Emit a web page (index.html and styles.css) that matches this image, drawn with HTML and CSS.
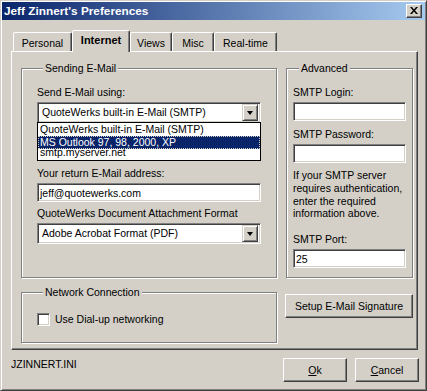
FILE: index.html
```html
<!DOCTYPE html>
<html>
<head>
<meta charset="utf-8">
<link rel="stylesheet" href="styles.css">
</head>
<body>
<div class="window">
  <div class="titlebar">
    <span class="title">Jeff Zinnert's Preferences</span>
    <span class="close"><svg width="8" height="7" viewBox="0 0 8 7"><path d="M0 0h2l2 2.5 2-2.5h2l-3 3.5 3 3.5h-2l-2-2.5-2 2.5h-2l3-3.5z" fill="#000"/></svg></span>
  </div>
  <div class="content">
    <div class="tabs">
      <div class="tab t-personal">Personal</div>
      <div class="tab t-internet selected">Internet</div>
      <div class="tab t-views">Views</div>
      <div class="tab t-misc">Misc</div>
      <div class="tab t-realtime">Real-time</div>
    </div>
    <div class="panel">
      <fieldset class="group sending">
        <legend>Sending E-Mail</legend>
        <div class="label first">Send E-Mail using:</div>
        <div class="combo-wrap">
          <div class="combo"><span class="combo-text">QuoteWerks built-in E-Mail (SMTP)</span><span class="drop"><span class="arrow"></span></span></div>
          <div class="droplist">
            <div class="item">QuoteWerks built-in E-Mail (SMTP)</div>
            <div class="item hl">MS Outlook 97, 98, 2000, XP</div>
            <div class="item under">smtp.myserver.net</div>
          </div>
        </div>
        <div class="label l-return">Your return E-Mail address:</div>
        <div class="textbox">jeff@quotewerks.com</div>
        <div class="label l-format">QuoteWerks Document Attachment Format</div>
        <div class="combo"><span class="combo-text">Adobe Acrobat Format (PDF)</span><span class="drop"><span class="arrow"></span></span></div>
      </fieldset>
      <fieldset class="group advanced">
        <legend>Advanced</legend>
        <div class="label first">SMTP Login:</div>
        <div class="textbox"></div>
        <div class="label l-pass">SMTP Password:</div>
        <div class="textbox"></div>
        <div class="help">If your SMTP server requires authentication, enter the required information above.</div>
        <div class="label l-port">SMTP Port:</div>
        <div class="textbox">25</div>
      </fieldset>
      <fieldset class="group network">
        <legend>Network Connection</legend>
        <div class="check-row"><span class="checkbox"></span><span>Use Dial-up networking</span></div>
      </fieldset>
      <div class="side">
        <div class="button setup">Setup E-Mail Signature</div>
      </div>
    </div>
    <div class="footer">
      <div class="ini">JZINNERT.INI</div>
      <div class="buttons">
        <div class="button dlg"><u>O</u>k</div>
        <div class="button dlg"><u>C</u>ancel</div>
      </div>
    </div>
  </div>
</div>
</body>
</html>
```
FILE: styles.css
```css
* { box-sizing: border-box; }
html, body { margin: 0; padding: 0; background: #d4d0c8; }
body {
  font-family: "Liberation Sans", Arial, sans-serif;
  font-size: 10.5px;
  line-height: 13px;
  color: #000;
}
.window {
  width: 427px;
  height: 391px;
  background: #d4d0c8;
  border: 1px solid;
  border-color: #d4d0c8 #404040 #404040 #d4d0c8;
  box-shadow: inset 1px 1px 0 #fff, inset -1px -1px 0 #808080;
  padding: 1px;
}
.titlebar {
  height: 18px;
  background: linear-gradient(to right, #0a246a, #a6caf0);
  display: flex;
  align-items: center;
  padding-left: 2px;
}
.title {
  color: #fff;
  font-weight: bold;
  font-size: 11.8px;
  letter-spacing: 0;
}
.close {
  margin-left: auto;
  margin-right: 3px;
  width: 16px;
  height: 14px;
  background: #d4d0c8;
  border: 1px solid;
  border-color: #fff #404040 #404040 #fff;
  box-shadow: inset -1px -1px 0 #808080;
  display: flex;
  align-items: center;
  justify-content: center;
  padding-bottom: 1px;
}
.content {
  padding: 10px 0 0 9px;
}
.tabs {
  display: flex;
  align-items: flex-end;
  height: 21px;
  padding-left: 2px;
  position: relative;
  z-index: 1;
}
.tab {
  height: 19px;
  border: 1px solid;
  border-bottom: none;
  border-color: #fff #404040 transparent #fff;
  border-radius: 2px 2px 0 0;
  box-shadow: inset -1px 0 0 #808080;
  text-align: center;
  padding-top: 4px;
  background: #d4d0c8;
}
.t-personal { width: 59px; }
.t-internet { width: 58px; }
.t-views { width: 42px; }
.t-misc { width: 42px; }
.t-realtime { width: 63px; }
.tab.selected {
  height: 22px;
  margin-bottom: -1px;
  font-weight: bold;
  padding-top: 3px;
  font-size: 11px;
}
.panel {
  width: 407px;
  height: 299px;
  border: 1px solid;
  border-color: #fff #404040 #404040 #fff;
  box-shadow: inset -1px -1px 0 #808080;
  display: grid;
  grid-template-columns: 256px 127px;
  grid-template-rows: 216px 57px;
  column-gap: 9px;
  row-gap: 8px;
  padding: 10px 0 0 9px;
}
.group {
  margin: 0;
  padding: 0;
  min-width: 0;
  border: 1px solid #808080;
  box-shadow: 1px 1px 0 #fff, inset 1px 1px 0 #fff;
  display: flex;
  flex-direction: column;
}
.group legend {
  padding: 0 2px;
  margin-left: 6px;
  background: #d4d0c8;
  line-height: 13px;
}
.sending { padding: 0 15px; }
.advanced { padding: 0 6px; }
.label { margin-bottom: 3px; }
.label.first { margin-top: 11px; }
.l-return { margin-top: 44px; }
.l-format { margin-top: 5px; }
.l-pass { margin-top: 7px; }
.l-port { margin-top: 13px; }
.combo-wrap { position: relative; }
.combo {
  height: 21px;
  background: #fff;
  border: 1px solid;
  border-color: #808080 #fff #fff #808080;
  box-shadow: inset 1px 1px 0 #404040, inset -1px -1px 0 #d4d0c8;
  display: flex;
  align-items: center;
  padding: 2px 2px 2px 4px;
}
.combo-text { flex: 1; }
.drop {
  width: 16px;
  height: 17px;
  background: #d4d0c8;
  border: 1px solid;
  border-color: #d4d0c8 #404040 #404040 #d4d0c8;
  box-shadow: inset 1px 1px 0 #fff, inset -1px -1px 0 #808080;
  display: flex;
  align-items: center;
  justify-content: center;
}
.arrow {
  width: 0;
  height: 0;
  border-left: 3.5px solid transparent;
  border-right: 3.5px solid transparent;
  border-top: 4px solid #000;
}
.droplist {
  position: absolute;
  left: 0;
  right: 0;
  top: 20px;
  height: 39px;
  background: #fff;
  border: 1px solid #000;
  overflow: hidden;
  z-index: 2;
}
.item {
  height: 13px;
  line-height: 13px;
  padding-left: 2px;
  white-space: nowrap;
}
.item.hl {
  background: #0a246a;
  color: #fff;
  outline: 1px dotted #d4d0c8;
  outline-offset: -1px;
  position: relative;
  z-index: 1;
}
.item.under { margin-top: -3px; }
.textbox {
  height: 19px;
  background: #fff;
  border: 1px solid;
  border-color: #808080 #fff #fff #808080;
  box-shadow: inset 1px 1px 0 #404040, inset -1px -1px 0 #d4d0c8;
  padding: 2px 2px 0 2px;
  line-height: 14px;
}
.help {
  margin-top: 6px;
  line-height: 12.8px;
}
.network { padding: 0 15px; }
.check-row {
  display: flex;
  align-items: center;
  margin-top: 14px;
}
.checkbox {
  width: 13px;
  height: 13px;
  background: #fff;
  border: 1px solid;
  border-color: #808080 #fff #fff #808080;
  box-shadow: inset 1px 1px 0 #404040, inset -1px -1px 0 #d4d0c8;
  margin-right: 5px;
}
.side { padding-top: 8px; margin-left: -1px; }
.button {
  background: #d4d0c8;
  border: 1px solid;
  border-color: #fff #404040 #404040 #fff;
  box-shadow: inset -1px -1px 0 #808080;
  display: flex;
  align-items: center;
  justify-content: center;
  height: 24px;
}
.setup { width: 128px; }
.footer {
  display: flex;
  justify-content: space-between;
  align-items: flex-start;
  width: 408px;
  padding-top: 7px;
}
.ini { padding-top: 1px; }
.buttons {
  display: flex;
  gap: 8px;
  padding-top: 1px;
}
.dlg { width: 64px; }
.dlg u { text-decoration: underline; text-underline-offset: 1px; }
```
